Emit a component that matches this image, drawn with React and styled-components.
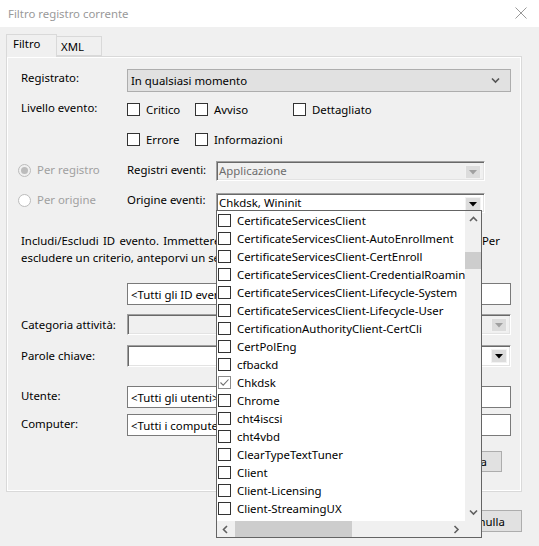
import React from 'react';
import styled, { createGlobalStyle } from 'styled-components';

const GlobalStyle = createGlobalStyle`
  html, body {
    margin: 0;
    padding: 0;
    background: #f0f0f0;
  }
  body {
    font-family: "Noto Sans", "DejaVu Sans", sans-serif;
    font-size: 11.4px;
    color: #000;
  }
`;

const Window = styled.div`
  position: relative;
  width: 539px;
  height: 546px;
  overflow: hidden;
  background: #f0f0f0;
  display: flex;
  flex-direction: column;
`;

const TitleBar = styled.div`
  box-sizing: border-box;
  height: 27px;
  flex: none;
  background: #fff;
  display: flex;
  align-items: center;
  justify-content: space-between;
  padding: 0 12px 1px 8px;
  color: #999;
`;

const Body = styled.div`
  padding: 6px 17px 0 6px;
  display: flex;
  flex-direction: column;
`;

const TabStrip = styled.div`
  display: flex;
  align-items: flex-end;
  height: 23px;
  position: relative;
  z-index: 1;
`;

const Tab = styled.div`
  box-sizing: border-box;
  height: ${p => (p.active ? 23 : 20)}px;
  width: ${p => p.width}px;
  border: 1px solid #d9d9d9;
  border-bottom: ${p => (p.active ? 'none' : '1px solid #d9d9d9')};
  ${p => !p.active && 'border-left: none;'}
  background: #f0f0f0;
  padding: ${p => (p.active ? '1px 0 0 6px' : '2px 0 0 4px')};
  line-height: 16px;
  margin-bottom: ${p => (p.active ? '-1px' : '0')};
`;

const Panel = styled.div`
  box-sizing: border-box;
  width: 516px;
  height: 436px;
  border: 1px solid #d9d9d9;
  box-shadow: inset 0 0 0 1px #fff;
  padding: 12px 10px 0 14px;
  display: flex;
  flex-direction: column;
`;

const Row = styled.div`
  display: flex;
  align-items: flex-start;
  margin-top: ${p => p.mt || 0}px;
  margin-left: ${p => p.ml || 0}px;
`;

const Label = styled.div`
  width: ${p => p.w || 106}px;
  flex: none;
  line-height: 14px;
  padding-top: ${p => p.pt || 0}px;
  color: ${p => (p.disabled ? '#a0a0a0' : '#000')};
  white-space: nowrap;
`;

const Field = styled.div`
  box-sizing: border-box;
  width: ${p => p.w || 384}px;
  height: ${p => p.h || 22}px;
  flex: none;
  position: relative;
  display: flex;
  align-items: center;
  padding-left: 4px;
  white-space: nowrap;
  overflow: hidden;
`;

const TextBox = styled(Field)`
  background: #fff;
  border: 1px solid #7a7a7a;
  padding-left: 3px;
`;

const Sunken = styled(Field)`
  background: ${p => (p.disabled ? '#f0f0f0' : '#fff')};
  color: ${p => (p.disabled ? '#6d6d6d' : '#000')};
  border-top: 1px solid #a0a0a0;
  border-left: 1px solid #a0a0a0;
  border-right: 1px solid #fff;
  border-bottom: 1px solid #fff;
  box-shadow: inset 1px 1px 0 #696969, inset -1px -1px 0 #e3e3e3;
  padding-left: 2px;
  padding-bottom: 2px;
  overflow: visible;
`;

const ArrowButton = styled.div`
  position: absolute;
  right: 3px;
  top: 3px;
  width: 16px;
  height: 14px;
  box-sizing: border-box;
  background: #dcdcdc;
  border: 1px solid #f2f2f2;
  display: flex;
  align-items: center;
  justify-content: center;
`;

const Combo = styled(Field)`
  background: #e1e1e1;
  border: 1px solid #adadad;
  padding-left: 3px;
  justify-content: space-between;
  padding-right: 10px;
  height: 23px;
`;

const CheckGroup = styled.div`
  display: flex;
  flex-direction: column;
  gap: 12px;
`;

const CheckRow = styled.div`
  display: flex;
  height: 18px;
  align-items: center;
`;

const CheckItem = styled.label`
  display: flex;
  align-items: center;
  gap: 6px;
  width: ${p => p.w}px;
  flex: none;
`;

const Box = styled.span`
  box-sizing: border-box;
  width: 13px;
  height: 13px;
  flex: none;
  background: #fff;
  border: 1px solid ${p => (p.soft ? '#8c8c8c' : '#333')};
  display: flex;
  align-items: center;
  justify-content: center;
`;

const Radio = styled.span`
  box-sizing: border-box;
  width: 13px;
  height: 13px;
  border-radius: 50%;
  border: 1px solid #bcbcbc;
  background: ${p => (p.checked ? '#f0f0f0' : '#fff')};
  display: flex;
  align-items: center;
  justify-content: center;
  flex: none;
  &::after {
    content: '';
    display: ${p => (p.checked ? 'block' : 'none')};
    width: 7px;
    height: 7px;
    border-radius: 50%;
    background: #bcbcbc;
  }
`;

const RadioLabel = styled.div`
  width: 109px;
  flex: none;
  display: flex;
  align-items: center;
  gap: 6px;
  color: #a0a0a0;
  line-height: 14px;
  margin-left: -3px;
  padding-top: ${p => p.pt || 0}px;
`;

const Paragraph = styled.div`
  margin-top: 19px;
  width: 479px;
  line-height: 17px;
`;

const Line = styled.div`
  white-space: nowrap;
  text-align: ${p => (p.justify ? 'justify' : 'left')};
  text-align-last: ${p => (p.justify ? 'justify' : 'auto')};
`;

const Button = styled.div`
  box-sizing: border-box;
  width: 75px;
  height: ${p => p.h || 22}px;
  background: #e1e1e1;
  border: 1px solid #adadad;
  display: flex;
  align-items: center;
  justify-content: center;
`;

const ButtonRow = styled.div`
  display: flex;
  justify-content: flex-end;
  gap: 5px;
  margin-top: ${p => p.mt || 0}px;
  margin-right: ${p => p.mr || 0}px;
`;

const DropList = styled.div`
  position: absolute;
  left: -1px;
  top: 16px;
  width: 266px;
  height: 328px;
  box-sizing: border-box;
  border: 1px solid #646464;
  background: #f0f0f0;
  display: grid;
  grid-template-columns: 248px 16px;
  grid-template-rows: 310px 16px;
  z-index: 5;
  color: #000;
`;

const ListBody = styled.div`
  background: #fff;
  overflow: hidden;
`;

const ListItem = styled.div`
  height: 18px;
  display: flex;
  align-items: center;
  gap: 6px;
  padding-left: 1px;
  white-space: nowrap;
`;

const VScroll = styled.div`
  display: flex;
  flex-direction: column;
  align-items: center;
  background: #f0f0f0;
`;

const HScroll = styled.div`
  display: flex;
  align-items: center;
  background: #f0f0f0;
`;

const ScrollArrow = styled.div`
  width: ${p => (p.horizontal ? 17 : 16)}px;
  height: ${p => (p.horizontal ? 16 : 17)}px;
  flex: none;
  display: flex;
  align-items: center;
  justify-content: center;
`;

const VTrack = styled.div`
  flex: 1;
  width: 100%;
  position: relative;
`;

const HTrack = styled.div`
  flex: 1;
  height: 100%;
  position: relative;
`;

const Thumb = styled.div`
  position: absolute;
  background: #cdcdcd;
`;

const Chevron = ({ dir, color = '#606060' }) => {
  const pts = {
    up: '1,5 4.5,1.5 8,5',
    down: '1,1.5 4.5,5 8,1.5',
    left: '5,1 1.5,4.5 5,8',
    right: '1.5,1 5,4.5 1.5,8',
  }[dir];
  const vertical = dir === 'up' || dir === 'down';
  return (
    <svg width={vertical ? 9 : 7} height={vertical ? 7 : 9} viewBox={vertical ? '0 0 9 7' : '0 0 7 9'}>
      <polyline points={pts} fill="none" stroke={color} strokeWidth="1.6" />
    </svg>
  );
};

const Triangle = ({ color }) => (
  <svg width="8" height="5" viewBox="0 0 8 5">
    <polygon points="0,0 8,0 4,4.5" fill={color} />
  </svg>
);

const CheckMark = () => (
  <svg width="11" height="11" viewBox="0 0 11 11">
    <polyline points="1.5,5.5 4.2,8.2 9.5,2.5" fill="none" stroke="#707070" strokeWidth="1.1" />
  </svg>
);

const sources = [
  'CertificateServicesClient',
  'CertificateServicesClient-AutoEnrollment',
  'CertificateServicesClient-CertEnroll',
  'CertificateServicesClient-CredentialRoaming',
  'CertificateServicesClient-Lifecycle-System',
  'CertificateServicesClient-Lifecycle-User',
  'CertificationAuthorityClient-CertCli',
  'CertPolEng',
  'cfbackd',
  'Chkdsk',
  'Chrome',
  'cht4iscsi',
  'cht4vbd',
  'ClearTypeTextTuner',
  'Client',
  'Client-Licensing',
  'Client-StreamingUX',
];

const checked = ['Chkdsk'];

const SourceList = () => (
  <DropList>
    <ListBody>
      {sources.map(s => (
        <ListItem key={s}>
          <Box soft={checked.includes(s)}>{checked.includes(s) && <CheckMark />}</Box>
          {s}
        </ListItem>
      ))}
    </ListBody>
    <VScroll>
      <ScrollArrow><Chevron dir="up" /></ScrollArrow>
      <VTrack>
        <Thumb style={{ top: 24, left: 0, width: 16, height: 17 }} />
      </VTrack>
      <ScrollArrow><Chevron dir="down" /></ScrollArrow>
    </VScroll>
    <HScroll>
      <ScrollArrow horizontal><Chevron dir="left" /></ScrollArrow>
      <HTrack>
        <Thumb style={{ left: 1, top: 0, width: 117, height: 16 }} />
      </HTrack>
      <ScrollArrow horizontal><Chevron dir="right" /></ScrollArrow>
    </HScroll>
    <div />
  </DropList>
);

export default function App() {
  return (
    <>
      <GlobalStyle />
      <Window>
        <TitleBar>
          <span>Filtro registro corrente</span>
          <svg width="12" height="12" viewBox="0 0 12 12">
            <path d="M0.5 0.5 L11.5 11.5 M11.5 0.5 L0.5 11.5" stroke="#999" strokeWidth="1" />
          </svg>
        </TitleBar>
        <Body>
          <TabStrip>
            <Tab active width={51}>Filtro</Tab>
            <Tab width={45}>XML</Tab>
          </TabStrip>
          <Panel>
            <Row>
              <Label pt={2}>Registrato:</Label>
              <Combo>
                <span>In qualsiasi momento</span>
                <Chevron dir="down" color="#555" />
              </Combo>
            </Row>

            <Row mt={8}>
              <Label pt={1}>Livello evento:</Label>
              <CheckGroup>
                <CheckRow>
                  <CheckItem w={68}><Box />Critico</CheckItem>
                  <CheckItem w={98}><Box />Avviso</CheckItem>
                  <CheckItem w={100}><Box />Dettagliato</CheckItem>
                </CheckRow>
                <CheckRow>
                  <CheckItem w={68}><Box />Errore</CheckItem>
                  <CheckItem w={120}><Box />Informazioni</CheckItem>
                </CheckRow>
              </CheckGroup>
            </Row>

            <Row mt={13}>
              <RadioLabel pt={2}><Radio checked />Per registro</RadioLabel>
              <Label w={89} pt={2}>Registri eventi:</Label>
              <Sunken disabled w={269} h={20}>
                Applicazione
                <ArrowButton><Triangle color="#a0a0a0" /></ArrowButton>
              </Sunken>
            </Row>

            <Row mt={12}>
              <RadioLabel><Radio />Per origine</RadioLabel>
              <Label w={89}>Origine eventi:</Label>
              <Sunken w={269} h={20}>
                Chkdsk, Wininit
                <ArrowButton><Triangle color="#000" /></ArrowButton>
                <SourceList />
              </Sunken>
            </Row>

            <Paragraph>
              <Line justify>Includi/Escludi ID evento. Immettere numeri ID e/o intervalli ID separati da virgole. Per</Line>
              <Line>escludere un criterio, anteporvi un segno meno. Ad esempio 1,3,5-99,-76</Line>
            </Paragraph>

            <Row mt={17} ml={106}>
              <TextBox>&lt;Tutti gli ID evento&gt;</TextBox>
            </Row>

            <Row mt={9}>
              <Label pt={4}>Categoria attività:</Label>
              <Sunken disabled h={21}>
                <ArrowButton><Triangle color="#a0a0a0" /></ArrowButton>
              </Sunken>
            </Row>

            <Row mt={10}>
              <Label pt={4}>Parole chiave:</Label>
              <Sunken h={22}>
                <ArrowButton><Triangle color="#000" /></ArrowButton>
              </Sunken>
            </Row>

            <Row mt={19}>
              <Label pt={3}>Utente:</Label>
              <TextBox>&lt;Tutti gli utenti&gt;</TextBox>
            </Row>

            <Row mt={6}>
              <Label pt={3}>Computer:</Label>
              <TextBox>&lt;Tutti i computer&gt;</TextBox>
            </Row>

            <ButtonRow mt={15} mr={9}>
              <Button h={21}>Cancella</Button>
            </ButtonRow>
          </Panel>
          <ButtonRow mt={18} mr={0}>
            <Button>OK</Button>
            <Button>Annulla</Button>
          </ButtonRow>
        </Body>
      </Window>
    </>
  );
}
